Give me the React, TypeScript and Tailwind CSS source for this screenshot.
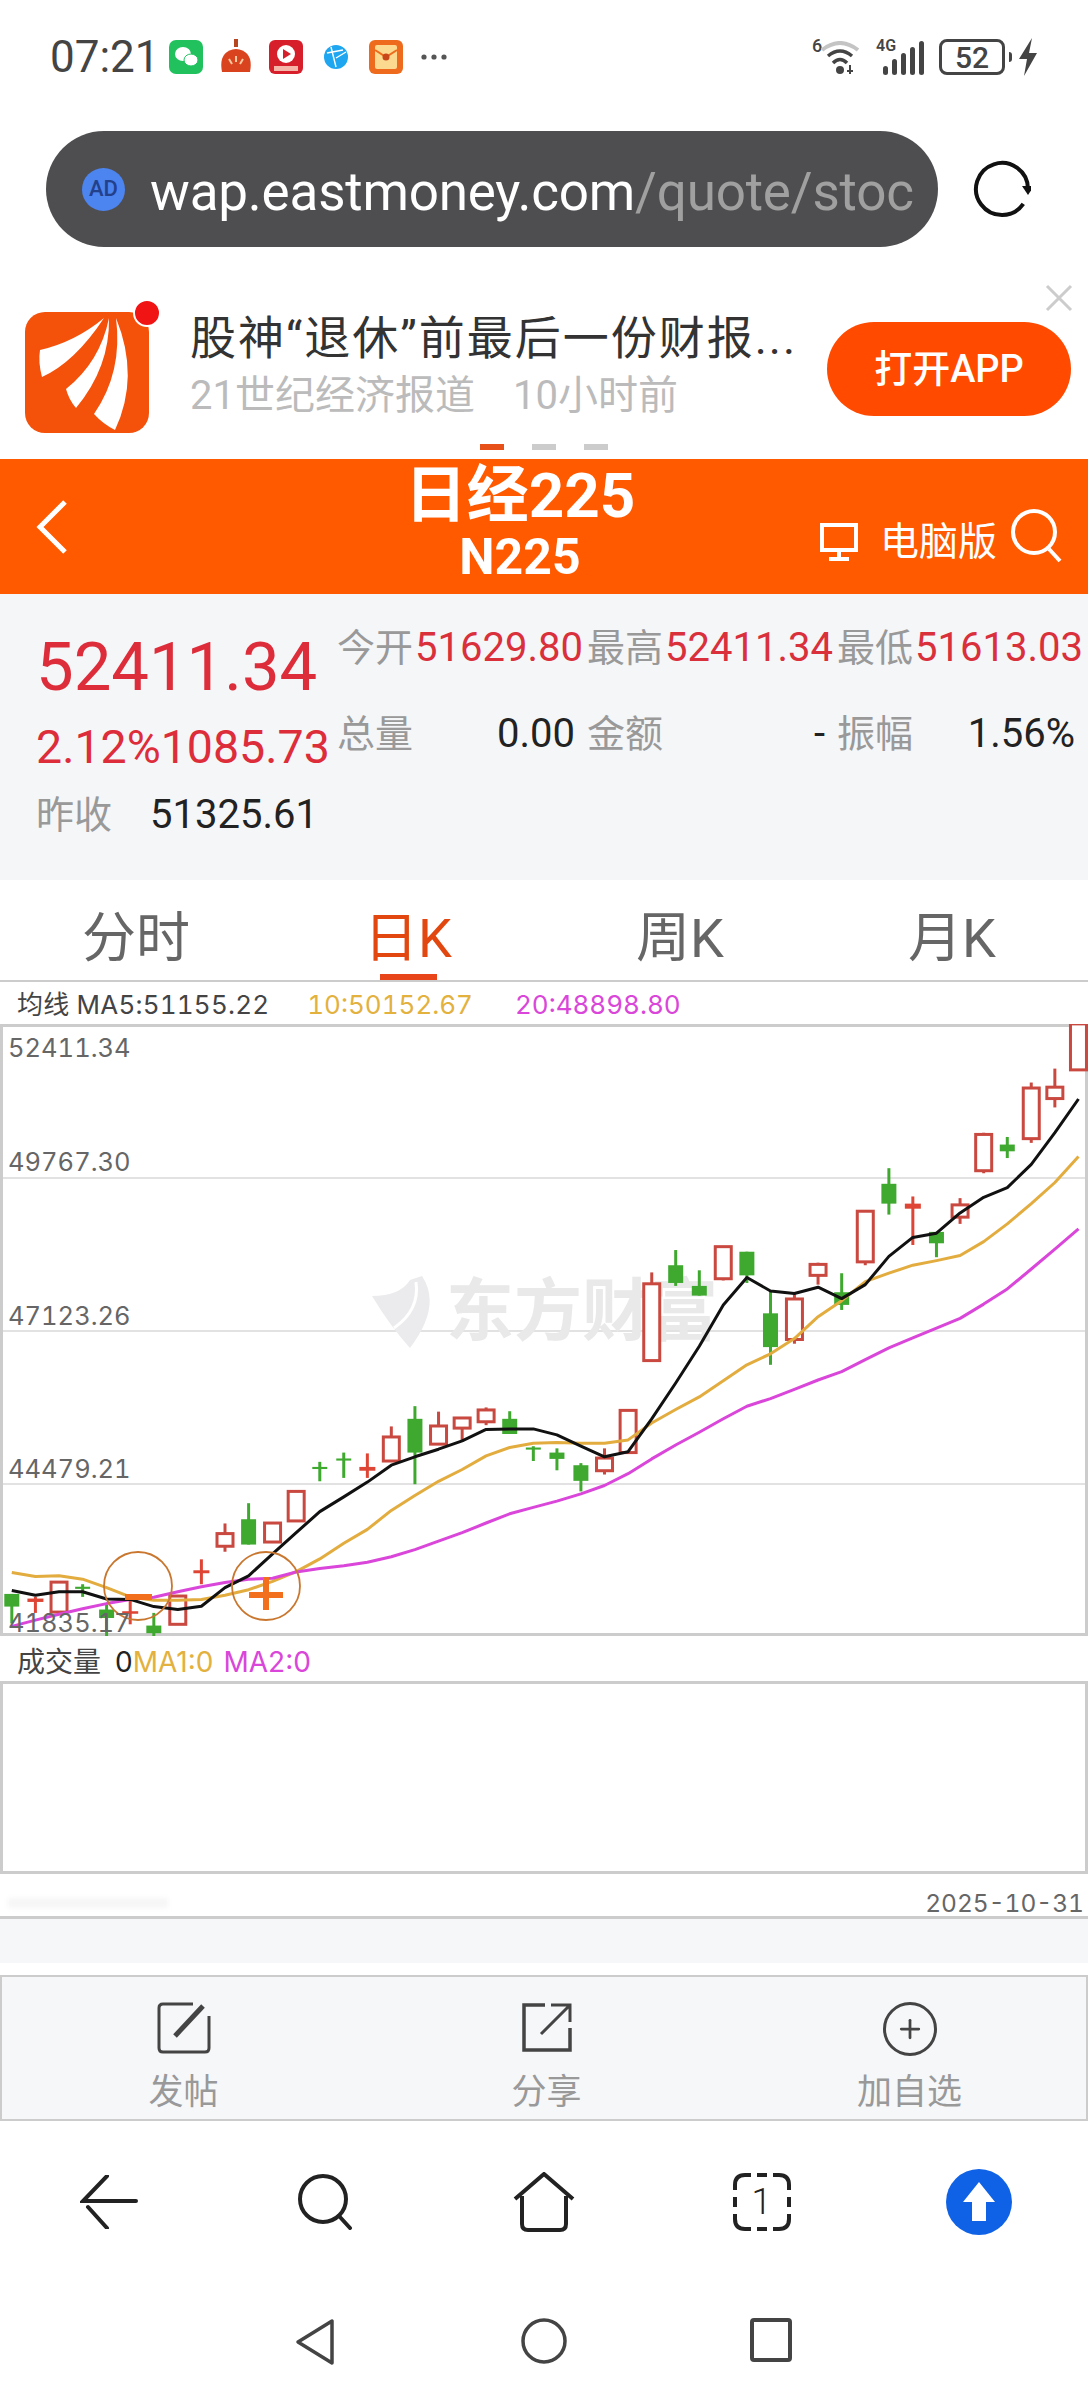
import { Plus } from 'lucide-react';

// chart data is in "sample units" read off the picture: 2.88 per px across, 2.37 per px down
const X = (v: number) => v / 2.88;
const Y = (v: number) => v / 2.37 - 44;

type Candle = [number, 'g' | 'r' | 'f', number, number, number, number];

// x, kind, body top, body bottom, wick top, wick bottom
const candles: Candle[] = [
  [34, 'g', 1455, 1485, 1455, 1525],
  [102, 'f', 1466, 1474, 1462, 1500],
  [170, 'r', 1427, 1498, 1427, 1498],
  [238, 'g', 1438, 1443, 1432, 1462],
  [307, 'g', 1492, 1512, 1480, 1563],
  [375, 'f', 1496, 1502, 1470, 1527],
  [443, 'g', 1530, 1548, 1500, 1560],
  [512, 'r', 1460, 1527, 1460, 1527],
  [580, 'f', 1399, 1406, 1373, 1432],
  [648, 'r', 1312, 1342, 1288, 1355],
  [716, 'g', 1278, 1338, 1240, 1338],
  [785, 'r', 1287, 1332, 1287, 1332],
  [853, 'r', 1212, 1282, 1212, 1282],
  [921, 'g', 1154, 1159, 1142, 1188],
  [990, 'g', 1134, 1139, 1120, 1180],
  [1058, 'f', 1154, 1163, 1122, 1180],
  [1127, 'r', 1083, 1140, 1058, 1140],
  [1195, 'g', 1040, 1120, 1010, 1195],
  [1263, 'r', 1057, 1100, 1023, 1100],
  [1331, 'r', 1038, 1062, 1038, 1095],
  [1400, 'r', 1019, 1047, 1013, 1055],
  [1468, 'g', 1040, 1076, 1022, 1076],
  [1536, 'g', 1108, 1113, 1105, 1140],
  [1604, 'g', 1120, 1135, 1110, 1162],
  [1673, 'g', 1150, 1187, 1145, 1212],
  [1741, 'r', 1133, 1163, 1110, 1172],
  [1809, 'r', 1020, 1120, 1020, 1120],
  [1877, 'r', 720, 902, 693, 905],
  [1946, 'g', 676, 718, 640, 725],
  [2014, 'g', 725, 748, 688, 748],
  [2083, 'r', 632, 708, 632, 712],
  [2151, 'g', 644, 700, 644, 718],
  [2219, 'g', 790, 870, 735, 912],
  [2288, 'r', 756, 852, 745, 862],
  [2356, 'r', 674, 700, 670, 722],
  [2424, 'g', 740, 770, 695, 782],
  [2492, 'r', 548, 668, 548, 676],
  [2560, 'g', 483, 530, 446, 556],
  [2629, 'f', 530, 542, 513, 628],
  [2697, 'g', 597, 624, 597, 657],
  [2765, 'r', 533, 562, 517, 578],
  [2833, 'r', 366, 452, 362, 458],
  [2901, 'g', 390, 406, 372, 422],
  [2970, 'r', 256, 376, 243, 386],
  [3038, 'r', 254, 281, 210, 302],
  [3106, 'r', 104, 213, 104, 213],
];

const xs = candles.map((c) => c[0]);
const ma5 = [1447, 1458, 1450, 1450, 1467, 1468, 1485, 1492, 1484, 1440, 1412, 1360, 1310, 1260, 1225, 1190, 1150, 1130, 1112, 1092, 1065, 1064, 1064, 1078, 1105, 1130, 1118, 1040, 955, 868, 770, 705, 737, 743, 728, 755, 722, 655, 610, 600, 552, 515, 492, 437, 362, 282];
const ma10 = [1404, 1414, 1412, 1420, 1440, 1462, 1470, 1470, 1468, 1458, 1445, 1425, 1402, 1372, 1335, 1302, 1257, 1222, 1188, 1160, 1128, 1108, 1098, 1096, 1098, 1098, 1090, 1050, 1018, 988, 950, 912, 886, 850, 798, 760, 715, 695, 676, 665, 653, 620, 578, 530, 480, 418];
const ma20 = [1532, 1517, 1503, 1490, 1478, 1468, 1463, 1450, 1438, 1428, 1420, 1418, 1403, 1395, 1388, 1380, 1367, 1350, 1330, 1310, 1287, 1265, 1250, 1235, 1218, 1198, 1170, 1135, 1102, 1072, 1040, 1010, 992, 970, 948, 928, 900, 872, 848, 825, 802, 768, 732, 685, 638, 590];

const toPoints = (values: number[]) =>
  values.map((v, i) => `${X(xs[i]).toFixed(1)},${Y(v).toFixed(1)}`).join(' ');

const KChart = () => (
  <svg viewBox="0 0 1088 612" className="absolute left-[-3px] top-[-3px] h-[612px] w-[1088px]">
    {candles.map(([x, kind, top, bottom, hi, lo]) => {
      const cx = X(x);
      const color = kind === 'g' ? '#3fa92f' : kind === 'f' ? '#de4535' : '#c9483f';
      const w = kind === 'g' ? 15 : 16;
      return (
        <g key={x}>
          <line x1={cx} x2={cx} y1={Y(hi)} y2={Y(lo)} stroke={color} strokeWidth="3" />
          {kind === 'r' ? (
            <rect x={cx - w / 2} y={Y(top)} width={w} height={Y(bottom) - Y(top)} fill="#fff" stroke={color} strokeWidth="3" />
          ) : (
            <rect x={cx - w / 2} y={Y(top)} width={w} height={Y(bottom) - Y(top)} fill={color} />
          )}
        </g>
      );
    })}
    <polyline points={toPoints(ma10)} fill="none" stroke="#e3ac3e" strokeWidth="3" strokeLinejoin="round" />
    <polyline points={toPoints(ma20)} fill="none" stroke="#d946d9" strokeWidth="3" strokeLinejoin="round" />
    <polyline points={toPoints(ma5)} fill="none" stroke="#111" strokeWidth="3" strokeLinejoin="round" />
    {/* buy / sell markers */}
    <circle cx="138" cy="562" r="34" fill="none" stroke="#c9772f" strokeWidth="1.8" />
    <circle cx="266" cy="562" r="34" fill="none" stroke="#c9772f" strokeWidth="1.8" />
    <rect x="125" y="570" width="27" height="6" fill="#f2701d" />
    <rect x="249" y="568" width="34" height="6" fill="#f2701d" />
    <rect x="263" y="553" width="6" height="33" fill="#f2701d" />
  </svg>
);

const AxisLabel = ({ top, children }: { top: string; children: string }) => (
  <span className={`absolute left-[5px] font-['Inter',sans-serif] text-[25.5px] leading-[30px] tabular-nums text-[#666] ${top}`}>
    {children}
  </span>
);

const StatusIcons = () => (
  <div className="flex items-center">
    <svg width="34" height="34" viewBox="0 0 34 34" className="ml-[17px]">
      <rect width="34" height="34" rx="7" fill="#21c25e" />
      <ellipse cx="14" cy="14" rx="8" ry="7" fill="#fff" />
      <ellipse cx="22" cy="20" rx="7" ry="6" fill="#fff" stroke="#21c25e" />
    </svg>
    <svg width="34" height="36" viewBox="0 0 34 36" className="ml-[16px]">
      <rect x="15" y="0" width="4" height="8" fill="#b5461f" />
      <path d="M3 33 Q-1 12 17 10 Q35 12 31 33 Z" fill="#d9431d" />
      <path d="M17 17v6M10 20l3 5M24 20l-3 5" stroke="#f9c9a0" strokeWidth="2" />
    </svg>
    <svg width="34" height="34" viewBox="0 0 34 34" className="ml-[16px]">
      <rect width="34" height="34" rx="6" fill="#d71f2b" />
      <circle cx="17" cy="14" r="9" fill="#fff" />
      <path d="M14 9l8 5-8 5z" fill="#d71f2b" />
      <rect x="5" y="26" width="24" height="5" fill="#f5b5a8" />
    </svg>
    <svg width="26" height="26" viewBox="0 0 26 26" className="ml-[20px]">
      <circle cx="13" cy="13" r="12" fill="#1ea7f0" />
      <path d="M4 9l16-3M8 3l5 20M13 14l10-6" stroke="#fff" strokeWidth="1.4" fill="none" />
    </svg>
    <svg width="34" height="34" viewBox="0 0 34 34" className="ml-[20px]">
      <rect width="34" height="34" rx="6" fill="#ee6a1c" />
      <rect x="6" y="5" width="22" height="24" rx="2" fill="#fbd98f" />
      <path d="M6 10l11 7 11-7" fill="none" stroke="#ee6a1c" strokeWidth="2" />
      <circle cx="17" cy="17" r="3.5" fill="#c9461a" />
    </svg>
    <svg width="26" height="6" viewBox="0 0 26 6" className="ml-[18px]">
      <circle cx="3" cy="3" r="2.6" fill="#555" />
      <circle cx="13" cy="3" r="2.6" fill="#555" />
      <circle cx="23" cy="3" r="2.6" fill="#555" />
    </svg>
  </div>
);

const StatusRight = () => (
  <div className="flex items-center text-[#444]">
    <div className="relative h-[36px] w-[50px]">
      <span className="absolute left-0 top-[-3px] text-[18px] font-medium leading-[20px]">6</span>
      <svg width="42" height="34" viewBox="0 0 42 34" className="absolute left-[8px] top-[2px]">
        <path d="M2 9 Q20 -5 38 9" fill="none" stroke="#c4c4c4" strokeWidth="4" />
        <path d="M8 15 Q20 5 32 15" fill="none" stroke="#444" strokeWidth="3.5" />
        <path d="M13 22 Q20 15 27 22" fill="none" stroke="#444" strokeWidth="3.5" />
        <circle cx="20" cy="29" r="4" fill="#444" />
        <path d="M30 24v9M27 30h6" stroke="#444" strokeWidth="2" />
      </svg>
    </div>
    <div className="relative ml-[14px] h-[36px] w-[50px]">
      <span className="absolute left-0 top-[-2px] text-[16px] font-semibold leading-[18px]">4G</span>
      <div className="absolute bottom-0 left-[7px] flex items-end gap-[4px]">
        <div className="h-[9px] w-[5px] rounded-full bg-[#444]" />
        <div className="h-[16px] w-[5px] rounded-full bg-[#444]" />
        <div className="h-[22px] w-[5px] rounded-full bg-[#444]" />
        <div className="h-[28px] w-[5px] rounded-full bg-[#444]" />
        <div className="h-[34px] w-[5px] rounded-full bg-[#444]" />
      </div>
    </div>
    <div className="ml-[13px] flex h-[36px] w-[66px] items-center justify-center rounded-[8px] border-[3px] border-[#444] text-[30px] font-medium">
      52
    </div>
    <div className="ml-[4px] h-[10px] w-[3px] rounded-r-sm bg-[#444]" />
    <svg width="20" height="38" viewBox="0 0 20 38" className="ml-[6px]">
      <path d="M14 0 L1 21 H9 L6 38 L19 15 H11 Z" fill="#444" />
    </svg>
  </div>
);

const AppLogo = () => (
  <div className="relative h-[121px] w-[124px] shrink-0">
    <svg width="124" height="121" viewBox="0 0 124 121">
      <rect width="124" height="121" rx="20" fill="#f4510b" />
      <path d="M79 6 Q50 30 15 38 Q13 50 17 65 Q50 50 79 6 Z" fill="#fff" />
      <path d="M84 6 Q75 50 41 77 Q44 88 51 96 Q85 55 84 6 Z" fill="#fff" />
      <path d="M91 6 Q98 60 69 102 Q78 112 90 118 Q115 65 91 6 Z" fill="#fff" />
    </svg>
    <div className="absolute right-[-12px] top-[-13px] h-[28px] w-[28px] rounded-full border-2 border-white bg-[#f01414]" />
  </div>
);

const Tab = ({ label, active }: { label: string; active?: boolean }) => (
  <div className={`relative flex flex-1 items-center justify-center pt-[18px] text-[54px] leading-none ${active ? 'text-[#e2470f]' : 'text-[#666]'}`}>
    {label}
    {active && <div className="absolute bottom-0 left-[108px] h-[6px] w-[57px] bg-[#e8451a]" />}
  </div>
);

const QuoteCell = ({ label, value, red, inset }: { label: string; value: string; red?: boolean; inset?: boolean }) => (
  <div className={`flex w-[250px] items-center justify-between ${inset ? 'pr-[12px]' : 'pr-[4px]'}`}>
    <span className="text-[38px] leading-none text-[#999]">{label}</span>
    <span className={`text-[40px] leading-none ${red ? 'text-[#d9303c]' : 'text-[#222]'}`}>{value}</span>
  </div>
);

const ActionItem = ({ icon, label }: { icon: React.ReactNode; label: string }) => (
  <div className="flex w-[363px] shrink-0 flex-col items-center pt-[25px]">
    <div className="h-[52px]">{icon}</div>
    <span className="mt-[21px] text-[35px] leading-[36px] text-[#999]">{label}</span>
  </div>
);

export default function App() {
  return (
    <div className="flex h-[2400px] w-[1088px] flex-col overflow-hidden bg-white font-['Roboto','Noto_Sans_CJK_SC',sans-serif]">
      {/* status bar */}
      <div className="flex h-[114px] shrink-0 items-center justify-between pl-[50px] pr-[50px]">
        <div className="flex items-center">
          <span className="text-[44px] leading-none text-[#444]">07:21</span>
          <div className="ml-[-8px]">
            <StatusIcons />
          </div>
        </div>
        <StatusRight />
      </div>

      {/* address bar */}
      <div className="mt-[17px] flex h-[116px] shrink-0 items-center pl-[46px]">
        <div className="flex h-full w-[892px] items-center overflow-hidden rounded-[58px] bg-[#4e4e50] pl-[36px]">
          <div className="relative flex h-[43px] w-[43px] shrink-0 items-center justify-center rounded-full bg-[#4c84f0] text-[22px] font-medium leading-none text-[#23408a]">
            AD
          </div>
          <span className="ml-[25px] mt-[6px] whitespace-nowrap text-[53px] leading-none tracking-[-0.2px] text-white">
            wap.eastmoney.com<span className="text-[#a0a0a0]">/quote/stoc</span>
          </span>
        </div>
        <svg width="58" height="58" viewBox="0 0 58 58" className="ml-[35px]">
          <path d="M50.3 43.9 A26 26 0 1 1 55 29" fill="none" stroke="#111" strokeWidth="4" />
          <path d="M49 26h12l-6 9z" fill="#111" />
        </svg>
      </div>

      {/* app banner */}
      <div className="relative h-[212px] shrink-0 pl-[25px] pt-[65px]">
        <svg width="28" height="28" viewBox="0 0 28 28" className="absolute right-[15px] top-[37px]">
          <path d="M2 2L26 26M26 2L2 26" stroke="#ccc" strokeWidth="3" />
        </svg>
        <div className="flex items-start">
          <AppLogo />
          <div className="ml-[41px] w-[637px] shrink-0">
            <div className="mt-[2px] whitespace-nowrap text-[46px] leading-[48px] tracking-[2px] text-[#333]">
              股神“退休”前最后一份财报...
            </div>
            <div className="mt-[12px] flex text-[40px] leading-[44px] text-[#bbb]">
              <span>21世纪经济报道</span>
              <span className="ml-[38px]">10小时前</span>
            </div>
          </div>
          <div className="mt-[10px] flex h-[94px] w-[244px] shrink-0 items-center justify-center rounded-[47px] bg-[#ff4a00] text-[38px] font-medium leading-none text-white">
            打开APP
          </div>
        </div>
        <div className="mt-[11px] flex justify-center gap-[28px] pr-[25px]">
          <div className="h-[6px] w-[24px] bg-[#e8501a]" />
          <div className="h-[6px] w-[24px] bg-[#ccc]" />
          <div className="h-[6px] w-[24px] bg-[#ccc]" />
        </div>
      </div>

      {/* orange header */}
      <div className="relative flex h-[135px] shrink-0 flex-col items-center bg-[#ff5a00] pr-[48px] text-white">
        <div className="mt-[4px] text-[62px] font-bold leading-[66px]">日经225</div>
        <div className="mt-[3px] text-[50px] font-bold leading-[50px]">N225</div>
        <svg width="34" height="56" viewBox="0 0 34 56" className="absolute left-[35px] top-[40px]">
          <path d="M30 3L5 28L30 53" fill="none" stroke="#fff" strokeWidth="5" />
        </svg>
        <div className="absolute right-[23px] top-[62px] flex items-center">
          <svg width="40" height="40" viewBox="0 0 40 40">
            <rect x="3" y="3" width="34" height="25" fill="none" stroke="#fff" strokeWidth="4" />
            <path d="M20 28v8M10 37h20" stroke="#fff" strokeWidth="4" />
          </svg>
          <span className="ml-[21px] text-[39px] leading-none">电脑版</span>
          <svg width="56" height="56" viewBox="0 0 56 56" className="ml-[12px] mt-[-14px]">
            <circle cx="25" cy="25" r="21" fill="none" stroke="#fff" strokeWidth="4" />
            <path d="M40 42l11 12" stroke="#fff" strokeWidth="4" />
          </svg>
        </div>
      </div>

      {/* quote block */}
      <div className="flex h-[286px] shrink-0 bg-[#f5f6f8] pl-[36px]">
        <div className="w-[301px] shrink-0">
          <div className="mt-[33px] text-[67px] leading-[80px] text-[#dd2d3a]">52411.34</div>
          <div className="mt-[13px] whitespace-nowrap text-[46.5px] leading-[54px] text-[#dd2d3a]">2.12%1085.73</div>
          <div className="mt-[21px] flex items-center">
            <span className="text-[38px] leading-none text-[#999]">昨收</span>
            <span className="ml-[38px] text-[40px] leading-none text-[#222]">51325.61</span>
          </div>
        </div>
        <div className="flex flex-col">
          <div className="mt-[34px] flex">
            <QuoteCell label="今开" value="51629.80" red />
            <QuoteCell label="最高" value="52411.34" red />
            <QuoteCell label="最低" value="51613.03" red />
          </div>
          <div className="mt-[46px] flex">
            <QuoteCell label="总量" value="0.00" inset />
            <QuoteCell label="金额" value="-" inset />
            <QuoteCell label="振幅" value="1.56%" inset />
          </div>
        </div>
      </div>

      {/* period tabs */}
      <div className="flex h-[102px] shrink-0 border-b-2 border-[#ccc]">
        <Tab label="分时" />
        <Tab label="日K" active />
        <Tab label="周K" />
        <Tab label="月K" />
      </div>

      {/* moving averages */}
      <div className="flex h-[42px] shrink-0 items-center whitespace-nowrap pl-[17px] pt-[4px] font-['Inter','Noto_Sans_CJK_SC',sans-serif] text-[26px] leading-none tabular-nums">
        <span className="tracking-[0.2px] text-[#444]">均线 MA5:51155.22</span>
        <span className="ml-[38px] text-[#e3b13e]">10:50152.67</span>
        <span className="ml-[42px] text-[#d946d9]">20:48898.80</span>
      </div>

      {/* k line chart */}
      <div className="relative h-[612px] shrink-0 border-x-[3px] border-y-[3px] border-[#ccc]">
        <div className="absolute inset-x-0 top-[150px] h-[2px] bg-[#e2e2e2]" />
        <div className="absolute inset-x-0 top-[303px] h-[2px] bg-[#e2e2e2]" />
        <div className="absolute inset-x-0 top-[456px] h-[2px] bg-[#e2e2e2]" />
        <div className="absolute left-[367px] top-[249px] flex items-center">
          <svg width="70" height="72" viewBox="0 0 70 72">
            <path d="M2 20 Q30 20 40 4 L52 0 Q72 30 40 72 Q20 50 2 20 Z" fill="#ebebed" />
            <path d="M46 6 Q50 34 24 52" fill="none" stroke="#fff" strokeWidth="3" />
          </svg>
          <span className="ml-[6px] text-[68px] font-bold leading-none text-[#e9e9ea]">东方财富</span>
        </div>
        <AxisLabel top="top-[6px]">52411.34</AxisLabel>
        <AxisLabel top="top-[120px]">49767.30</AxisLabel>
        <AxisLabel top="top-[274px]">47123.26</AxisLabel>
        <AxisLabel top="top-[427px]">44479.21</AxisLabel>
        <KChart />
        <AxisLabel top="top-[581px]">41835.17</AxisLabel>
      </div>

      {/* volume */}
      <div className="flex h-[45px] shrink-0 items-center whitespace-nowrap pl-[17px] pt-[6px] font-['Inter','Noto_Sans_CJK_SC',sans-serif] text-[28px] leading-none">
        <span className="text-[#444]">成交量</span>
        <span className="ml-[14px] text-[#222]">0</span>
        <span className="text-[#e3b13e]">MA1:0</span>
        <span className="ml-[10px] text-[#d946d9]">MA2:0</span>
      </div>
      <div className="h-[193px] shrink-0 border-x-[3px] border-y-[3px] border-[#ccc]" />

      <div className="flex h-[45px] shrink-0 items-center justify-between border-b-[3px] border-[#ccc] pl-[8px] pr-[4px] pt-[16px] font-['Inter',sans-serif] text-[24.5px] leading-none tabular-nums text-[#666]">
        <div className="h-[10px] w-[160px] bg-[#f6f6f6] blur-[2px]" />
        <span>2025-10-31</span>
      </div>
      <div className="h-[44px] shrink-0 bg-[#f6f7f9]" />
      <div className="h-[12px] shrink-0" />

      {/* post / share / watchlist */}
      <div className="flex h-[146px] shrink-0 border-x-2 border-y-2 border-[#ccc] bg-[#f6f7f9]">
        <ActionItem
          label="发帖"
          icon={
            <svg width="54" height="52" viewBox="0 0 54 52">
              <path d="M36 2H6Q2 2 2 6V46Q2 50 6 50H48Q52 50 52 46V14" fill="none" stroke="#444" strokeWidth="3" />
              <path d="M18 34L46 4" stroke="#444" strokeWidth="5" />
            </svg>
          }
        />
        <ActionItem
          label="分享"
          icon={
            <svg width="52" height="52" viewBox="0 0 52 52">
              <path d="M24 3H3V48H49V26" fill="none" stroke="#444" strokeWidth="3.5" />
              <path d="M20 32L48 4M30 3H49V20" fill="none" stroke="#444" strokeWidth="3" />
            </svg>
          }
        />
        <ActionItem
          label="加自选"
          icon={
            <div className="flex h-[54px] w-[54px] items-center justify-center rounded-full border-[3px] border-[#444]">
              <Plus size={30} strokeWidth={2.2} color="#444" />
            </div>
          }
        />
      </div>

      {/* browser toolbar */}
      <div className="grid h-[160px] shrink-0 grid-cols-5 items-center justify-items-center pt-[2px]">
        <svg width="58" height="54" viewBox="0 0 58 54">
          <path d="M56 26H3L27 1M8 32L27 53" fill="none" stroke="#222" strokeWidth="4" strokeLinecap="round" />
        </svg>
        <svg width="56" height="56" viewBox="0 0 56 56">
          <circle cx="25" cy="25" r="23" fill="none" stroke="#222" strokeWidth="4" />
          <path d="M41 42l11 12" stroke="#222" strokeWidth="4" strokeLinecap="round" />
        </svg>
        <svg width="62" height="60" viewBox="0 0 62 60">
          <path d="M2 27L31 2L60 27M9 24V52Q9 58 15 58H47Q53 58 53 52V24" fill="none" stroke="#222" strokeWidth="4" />
        </svg>
        <div className="relative flex h-[60px] w-[60px] items-center justify-center text-[36px] font-light leading-none text-[#222]">
          <svg width="60" height="60" viewBox="0 0 60 60" className="absolute inset-0">
            <path
              d="M3 18V13Q3 3 13 3H19M41 3H47Q57 3 57 13V18M57 42V47Q57 57 47 57H41M19 57H13Q3 57 3 47V42M25 3H35M25 57H35M3 25V35M57 25V35"
              fill="none"
              stroke="#222"
              strokeWidth="4"
            />
          </svg>
          1
        </div>
        <svg width="66" height="66" viewBox="0 0 66 66">
          <circle cx="33" cy="33" r="33" fill="#0f62e6" />
          <path d="M33 13L49 33H40V52H26V33H17Z" fill="#fff" />
        </svg>
      </div>

      {/* system nav */}
      <div className="flex flex-1 items-start justify-center pt-[37px]">
        <svg width="42" height="48" viewBox="0 0 42 48" className="ml-[-2px]">
          <path d="M38 3V45L4 24Z" fill="none" stroke="#444" strokeWidth="3.5" strokeLinejoin="round" />
        </svg>
        <svg width="46" height="46" viewBox="0 0 46 46" className="ml-[185px]">
          <circle cx="23" cy="23" r="21" fill="none" stroke="#444" strokeWidth="3.5" />
        </svg>
        <svg width="42" height="44" viewBox="0 0 42 44" className="ml-[183px]">
          <rect x="2" y="2" width="38" height="40" rx="2" fill="none" stroke="#444" strokeWidth="4" />
        </svg>
      </div>
    </div>
  );
}
